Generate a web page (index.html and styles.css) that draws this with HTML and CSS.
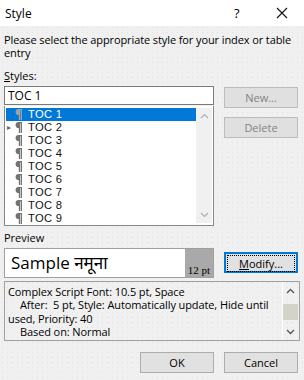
FILE: index.html
```html
<!DOCTYPE html>
<html lang="en">
<head>
    <meta charset="UTF-8">
    <title>Style</title>
    <link rel="stylesheet" href="styles.css">
</head>
<body>
    <svg width="0" height="0" class="defs">
        <symbol id="pilcrow" viewBox="0 0 7 11">
            <path d="M3.4 0H7V11H5.7V1.3H5.1V11H3.8V6A3 3 0 0 1 3.4 0Z"/>
        </symbol>
    </svg>
    <div class="titlebar">
        <span class="title">Style</span>
        <span class="help">?</span>
        <span class="close">
            <svg width="12" height="12" viewBox="0 0 12 12"><path d="M1 1L11 11M11 1L1 11" stroke="#111" stroke-width="1.1" fill="none"/></svg>
        </span>
    </div>
    <div class="dialog">
        <p class="intro">Please select the appropriate style for your index or table entry</p>
        <div class="label"><u>S</u>tyles:</div>
        <div class="main">
            <div class="left">
                <div class="style-input">TOC 1</div>
                <div class="style-list">
                    <ul class="rows">
                        <li class="selected"><span class="arrow"></span><svg class="pil"><use href="#pilcrow"/></svg>TOC 1</li>
                        <li><span class="arrow">&#9656;</span><svg class="pil"><use href="#pilcrow"/></svg>TOC 2</li>
                        <li><span class="arrow"></span><svg class="pil"><use href="#pilcrow"/></svg>TOC 3</li>
                        <li><span class="arrow"></span><svg class="pil"><use href="#pilcrow"/></svg>TOC 4</li>
                        <li><span class="arrow"></span><svg class="pil"><use href="#pilcrow"/></svg>TOC 5</li>
                        <li><span class="arrow"></span><svg class="pil"><use href="#pilcrow"/></svg>TOC 6</li>
                        <li><span class="arrow"></span><svg class="pil"><use href="#pilcrow"/></svg>TOC 7</li>
                        <li><span class="arrow"></span><svg class="pil"><use href="#pilcrow"/></svg>TOC 8</li>
                        <li><span class="arrow"></span><svg class="pil"><use href="#pilcrow"/></svg>TOC 9</li>
                    </ul>
                    <div class="scroll light">
                        <svg width="9" height="6" viewBox="0 0 9 6"><path d="M1 5L4.5 1.5L8 5" stroke="#b0b0b0" stroke-width="1.2" fill="none"/></svg>
                        <svg width="9" height="6" viewBox="0 0 9 6"><path d="M1 1L4.5 4.5L8 1" stroke="#b0b0b0" stroke-width="1.2" fill="none"/></svg>
                    </div>
                </div>
                <div class="label preview-label">Preview</div>
                <div class="preview">
                    <div class="sample">Sample नमूना</div>
                    <div class="size">12 pt</div>
                </div>
            </div>
            <div class="right">
                <button class="btn disabled">New...</button>
                <button class="btn disabled">Delete</button>
                <div class="spacer"></div>
                <button class="btn focused"><span class="focus-ring"><u>M</u>odify...</span></button>
            </div>
        </div>
        <div class="description">
            <div class="desc-text">
                <div>Complex Script Font: 10.5 pt, Space</div>
                <div class="indent">After:&nbsp; 5 pt, Style: Automatically update, Hide until</div>
                <div>used, Priority: 40</div>
                <div class="indent">Based on: Normal</div>
            </div>
            <div class="scroll dark">
                <svg width="9" height="6" viewBox="0 0 9 6"><path d="M1 5L4.5 1.5L8 5" stroke="#555" stroke-width="1.3" fill="none"/></svg>
                <div class="thumb"></div>
                <svg width="9" height="6" viewBox="0 0 9 6"><path d="M1 1L4.5 4.5L8 1" stroke="#555" stroke-width="1.3" fill="none"/></svg>
            </div>
        </div>
        <div class="footer">
            <button class="btn">OK</button>
            <button class="btn">Cancel</button>
        </div>
    </div>
</body>
</html>
```

FILE: styles.css
```css
body {
    margin: 0;
    width: 304px;
    height: 380px;
    overflow: hidden;
    font-family: "Open Sans", "Noto Sans", sans-serif;
    font-size: 11px;
    color: #000;
    background-color: #f0f0f0;
    background-image: radial-gradient(circle, #e2e2e2 0.6px, transparent 0.8px);
    background-size: 5px 5px;
}

.defs {
    position: absolute;
}

.titlebar {
    height: 26px;
    background: white;
    display: flex;
    align-items: center;
    padding-left: 5px;
    font-size: 12px;
}

.title {
    flex: 1;
}

.help {
    width: 42px;
    font-size: 13px;
}

.close {
    width: 28px;
    display: flex;
}

.dialog {
    padding: 0 4px;
}

.intro {
    margin: 7px 0 0;
    line-height: 13px;
    letter-spacing: -0.1px;
}

.label {
    margin-top: 10px;
    line-height: 13px;
}

.main {
    display: grid;
    grid-template-columns: 210px 74px;
    column-gap: 10px;
    margin-top: 4px;
}

.style-input {
    height: 17px;
    border: 1px solid #7a7a7a;
    background: white;
    padding-left: 3px;
    line-height: 17px;
    font-size: 12px;
}

.style-list {
    height: 119px;
    border: 1px solid #828790;
    border-top: none;
    margin-top: 1px;
    background: white;
    display: flex;
}

.rows {
    list-style: none;
    margin: 0;
    padding: 2px 0 0 1px;
    flex: 1;
}

.rows li {
    height: 13px;
    line-height: 13px;
    font-family: "Liberation Sans", sans-serif;
    font-size: 11.2px;
    letter-spacing: 0.3px;
    display: flex;
    align-items: center;
    color: #111;
}

.rows li.selected {
    background: #0078d7;
    color: white;
}

.arrow {
    width: 7px;
    padding-left: 1px;
    color: #666;
    font-size: 8px;
    overflow: hidden;
}

.pil {
    width: 7px;
    height: 11px;
    margin: 0 6px 0 1px;
    fill: #737373;
}

.rows li.selected .pil {
    fill: #a3a3a3;
}

.scroll {
    width: 16px;
    background: #f0f0f0;
    display: flex;
    flex-direction: column;
    align-items: center;
    justify-content: space-between;
    padding: 5px 0;
    box-sizing: border-box;
}

.scroll.light {
    margin: 2px 1px 2px 0;
}

.preview-label {
    margin-top: 5px;
}

.preview {
    margin-top: 4px;
    height: 28px;
    border: 1px solid #a0a0a0;
    background: white;
    display: flex;
}

.sample {
    flex: 1;
    font-size: 17px;
    line-height: 28px;
    padding-left: 6px;
}

.size {
    width: 28px;
    background: #a9a9a9;
    font-family: "Liberation Serif", serif;
    font-size: 11px;
    display: flex;
    align-items: flex-end;
    justify-content: center;
    padding-bottom: 1px;
}

.right {
    display: flex;
    flex-direction: column;
    padding-top: 1px;
}

.btn {
    width: 74px;
    height: 21px;
    font-family: inherit;
    font-size: 11px;
    color: #000;
    background: #e1e1e1;
    border: 1px solid #adadad;
    padding: 0;
    margin: 0 0 9px;
}

.btn.disabled {
    color: #838383;
    background: #e0e0e0;
    border-color: #bcbcbc;
}

.spacer {
    flex: 1;
}

.btn.focused {
    border: 2px solid #0078d7;
    margin: 0 0 5px;
    padding: 1px;
    width: 74px;
}

.focus-ring {
    display: block;
    height: 15px;
    line-height: 15px;
    border: 1px dotted #000;
}

.description {
    margin-top: 3px;
    height: 58px;
    border: 1px solid #a0a0a0;
    display: flex;
}

.desc-text {
    flex: 1;
    padding: 3px 0 0 3px;
    line-height: 13.4px;
    letter-spacing: -0.1px;
}

.indent {
    padding-left: 12px;
}

.scroll.dark {
    width: 15px;
    border-left: 1px solid white;
    margin: 0 2px 0 0;
    padding: 6px 0 5px;
    background: transparent;
}

.thumb {
    width: 15px;
    height: 16px;
    background: #d3d3c9;
}

.footer {
    display: flex;
    justify-content: flex-end;
    gap: 10px;
    margin-top: 11px;
    padding-right: 2px;
}

.footer .btn {
    margin: 0;
}
```
